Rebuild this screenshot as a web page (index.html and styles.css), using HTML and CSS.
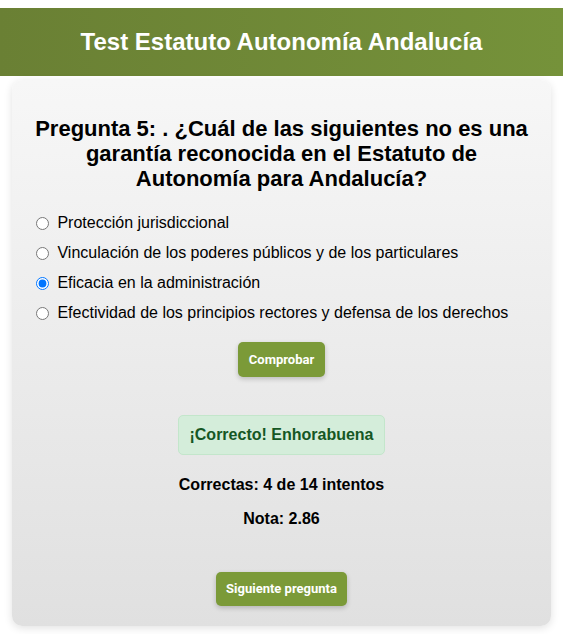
FILE: index.html
```html
<!DOCTYPE html>
<html lang="es">
<head>
<meta charset="utf-8">
<title>Test Estatuto Autonomía Andalucía</title>
<link rel="stylesheet" href="styles.css">
</head>
<body>
<header class="site-header">
  <h1 class="site-title">Test Estatuto Autonomía Andalucía</h1>
</header>
<main class="card">
  <h2 class="question">Pregunta 5: . ¿Cuál de las siguientes no es una garantía reconocida en el Estatuto de Autonomía para Andalucía?</h2>
  <form class="options">
    <label class="option"><input type="radio" name="r"> Protección jurisdiccional</label>
    <label class="option"><input type="radio" name="r"> Vinculación de los poderes públicos y de los particulares</label>
    <label class="option"><input type="radio" name="r" checked> Eficacia en la administración</label>
    <label class="option"><input type="radio" name="r"> Efectividad de los principios rectores y defensa de los derechos</label>
  </form>
  <div class="actions">
    <button class="btn btn-check" type="button">Comprobar</button>
  </div>
  <div class="result">
    <div class="feedback">¡Correcto! Enhorabuena</div>
    <p class="stat">Correctas: 4 de 14 intentos</p>
    <p class="stat">Nota: 2.86</p>
  </div>
  <div class="actions next">
    <button class="btn btn-next" type="button">Siguiente pregunta</button>
  </div>
</main>
</body>
</html>
```
FILE: styles.css
```css
html, body {
  margin: 0;
  padding: 0;
}
body {
  padding-top: 8px;
  font-family: "Liberation Sans", Arial, sans-serif;
  color: #000;
  background: #fff;
}
.site-header {
  background: linear-gradient(to right, #6a8034, #75923a);
  padding: 20px;
  text-align: center;
}
.site-title {
  margin: 0;
  color: #fff;
  font-size: 24px;
  line-height: 28px;
  font-weight: bold;
}
.card {
  display: block;
  margin: 4px 12px 8px 12px;
  padding: 20px;
  border-radius: 10px;
  background: linear-gradient(to bottom, #f7f7f7, #e0e0e0);
  box-shadow: 0 2px 8px rgba(0,0,0,0.12);
}
.question {
  margin: 16px 0 17px;
  text-align: center;
  font-size: 22px;
  line-height: 25px;
  font-weight: bold;
}
.options {
  display: flex;
  flex-direction: column;
}
.option {
  display: block;
  font-size: 16px;
  line-height: 18px;
  margin: 6px 0;
}
.option input {
  margin: 3px 4px 0 4px;
  vertical-align: top;
  width: 13px;
  height: 13px;
}
.actions {
  display: flex;
  justify-content: center;
  margin-top: 14px;
}
.btn {
  border: none;
  border-radius: 5px;
  background: #7b9a38;
  color: #fff;
  font-family: Roboto, "Liberation Sans", Arial, sans-serif;
  font-weight: bold;
  box-shadow: 0 2px 5px rgba(0,0,0,0.2);
  cursor: pointer;
}
.btn-check {
  font-size: 13px;
  line-height: 16px;
  padding: 10px 11px 9px;
}
.result {
  display: flex;
  flex-direction: column;
  align-items: center;
  margin-top: 38px;
}
.feedback {
  background: #d4edda;
  border: 1px solid #c3e6cb;
  color: #155724;
  border-radius: 5px;
  padding: 10px;
  font-size: 16px;
  line-height: 18px;
  font-weight: bold;
}
.stat {
  margin: 16px 0 0;
  font-size: 16px;
  line-height: 18px;
  font-weight: bold;
}
.stat:first-of-type {
  margin-top: 21px;
}
.next {
  margin-top: 44px;
}
.btn-next {
  font-size: 13px;
  line-height: 16px;
  padding: 9px 10px 9px;
}
```
